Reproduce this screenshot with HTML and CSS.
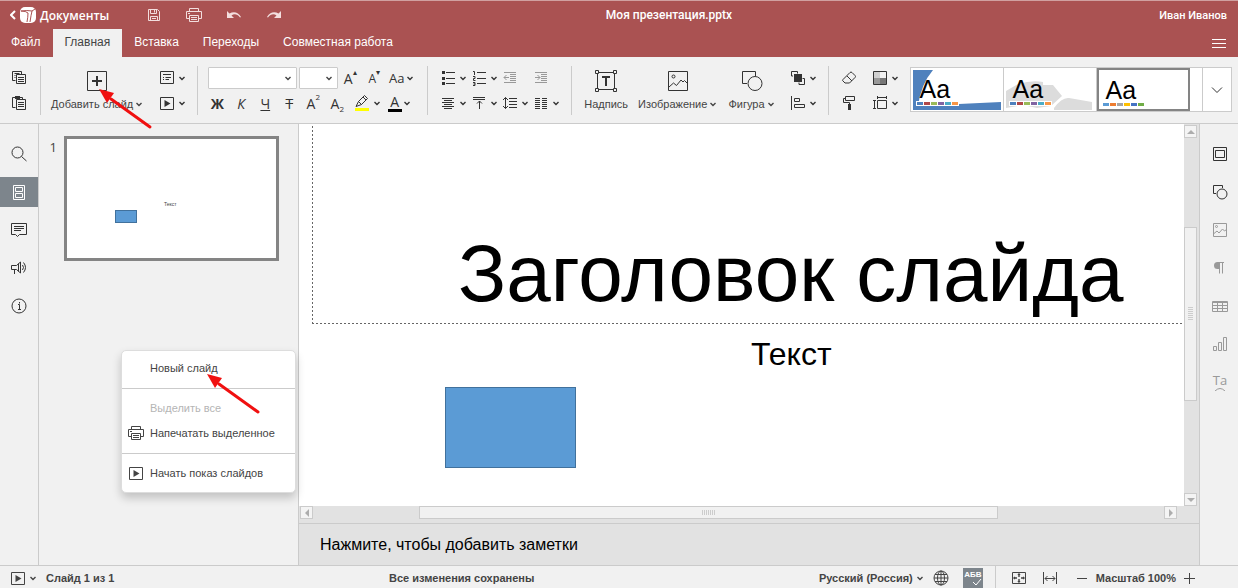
FILE: index.html
```html
<!DOCTYPE html>
<html lang="ru">
<head>
    <meta charset="UTF-8">
    <meta name="viewport" content="width=device-width, initial-scale=1.0">
    <title>Моя презентация.pptx</title>
    <link rel="stylesheet" href="styles.css">
</head>
<body>
    <!-- Icon set -->
    <svg class="sprite" aria-hidden="true">
        <symbol id="i-chev" viewBox="0 0 10 10"><path class="mid" d="M2.500 4L5 6.500 7.500 4"/></symbol>
        <symbol id="i-save" viewBox="0 0 20 20"><path d="M4.500 4.500h9l2 2v9h-11zM6.500 4.500v4h6v-4M10.500 5v2.500M6.500 15.500v-4h7v4M8 13.500h4"/></symbol>
        <symbol id="i-print" viewBox="0 0 20 20"><path d="M5.500 6.500v-3h9v3M5.500 13.500h-3v-7h15v7h-3M5.500 10.500h9v6h-9zM7 12.500h6M7 14.500h6M4 8.500h2"/></symbol>
        <symbol id="i-undo" viewBox="0 0 20 20"><path class="fill" d="M3 6v7h7L7.500 10.500C10 8.500 13.500 9 16 12.500L17 12C14.500 7 9.500 6 5.500 8.500z"/></symbol>
        <symbol id="i-redo" viewBox="0 0 20 20"><path class="fill" d="M17 6v7h-7l2.500-2.500C10 8.500 6.500 9 4 12.500L3 12C5.500 7 10.500 6 14.500 8.500z"/></symbol>
        <symbol id="i-copy" viewBox="0 0 20 20"><path d="M6.500 12.500h-3v-9h9v3M5.500 5.500h5M5.500 7.500h1M5.500 9.500h1M7.500 6.500h9v9h-9zM9 9.500h6M9 11.500h6M9 13.500h6"/></symbol>
        <symbol id="i-paste" viewBox="0 0 20 20"><path d="M6.500 14.500h-3v-10h10v2M7.500 6.500h9v10h-9zM9 9.500h6M9 11.500h6M9 13.500h6"/><path class="fill" d="M6 3h5v3H6z"/></symbol>
        <symbol id="i-add" viewBox="0 0 24 24"><path d="M1.500 2.500h19v19h-19z"/><path class="thick" d="M11 7v10M6 12h10"/></symbol>
        <symbol id="i-layout" viewBox="0 0 20 20"><path d="M3.500 3.500h13v12h-13zM6 6.500h8M6 9.500h1M8.500 9.500h5.500M6 11.500h1M8.500 11.500h3.500"/></symbol>
        <symbol id="i-play" viewBox="0 0 20 20"><path d="M3.500 4.500h13v12h-13z"/><path class="fill" d="M7.500 7v7l6-3.500z"/></symbol>
        <symbol id="i-marker" viewBox="0 0 20 20"><path d="M4 13.500l2.500-5L12.500 2.500l3 3-6 6zM6.500 8.500l3 3M11 4l3 3"/><path class="yellow" d="M3 15h14v3H3z"/></symbol>
        <symbol id="i-bullets" viewBox="0 0 20 20"><path d="M8 4.500h9M8 10.500h9M8 15.500h9"/><path class="fill" d="M4 3h3v3H4zM4 9h3v3H4zM4 14h3v3H4z"/></symbol>
        <symbol id="i-numbers" viewBox="0 0 20 20"><path d="M8 4.500h9M8 10.500h9M8 15.500h9M4 3.500h1.500v3.500M4 8.500h2v2H4.500v2H6.500M4 14.500h2v3H4M4.500 16h1.500"/></symbol>
        <symbol id="i-outdent" viewBox="0 0 20 20"><path d="M4 4.500h12M10 6.500h6M10 8.500h6M10 10.500h6M10 12.500h6M4 14.500h12M9 9.500H4M6.500 7L4 9.500 6.500 12"/></symbol>
        <symbol id="i-indent" viewBox="0 0 20 20"><path d="M4 4.500h12M10 6.500h6M10 8.500h6M10 10.500h6M10 12.500h6M4 14.500h12M4 9.500h5M6.500 7L9 9.500 6.500 12"/></symbol>
        <symbol id="i-center" viewBox="0 0 20 20"><path d="M4 5.500h12M6 7.500h8M4 9.500h12M6 11.500h8M4 13.500h12M6 15.500h8"/></symbol>
        <symbol id="i-valign" viewBox="0 0 20 20"><path d="M4 4.500h12M4 6.500h12M10.500 16V8M8 10.500L10.500 8 13 10.500"/></symbol>
        <symbol id="i-spacing" viewBox="0 0 20 20"><path d="M9 5.500h8M9 8.500h8M9 11.500h8M9 14.500h8M5.500 4.500v11M3 7l2.500-2.500L8 7M3 13l2.500 2.500L8 13"/></symbol>
        <symbol id="i-columns" viewBox="0 0 20 20"><path d="M4 5.500h5M4 7.500h5M4 9.500h5M4 11.500h5M4 13.500h5M4 15.500h5M11 5.500h5M11 7.500h5M11 9.500h5M11 11.500h5M11 13.500h5M11 15.500h5"/></symbol>
        <symbol id="i-text" viewBox="0 0 24 24"><path d="M3.500 3.500h17v17h-17z"/><path class="box" d="M1.500 1.500h3v3h-3zM19.500 1.500h3v3h-3zM1.500 19.500h3v3h-3zM19.500 19.500h3v3h-3z"/><path class="thick" d="M8 8h8M12 8v9"/></symbol>
        <symbol id="i-image" viewBox="0 0 24 24"><path d="M2.500 2.500h19v19h-19zM3 18l4.500-4 3 2.500L15 11l2 2 1.500-1.500 3 3"/><circle cx="7.500" cy="7.500" r="1.500"/></symbol>
        <symbol id="i-shape" viewBox="0 0 24 24"><path d="M7 14.500H2.500v-12h13v4.500"/><circle cx="15" cy="14.500" r="7"/></symbol>
        <symbol id="i-arrange" viewBox="0 0 20 20"><path d="M3.500 8V3.500h6v2M3.500 8H5M11 16.500h5.500v-6h-2M11 16.500v-2"/><path class="fill" d="M6 6h8v8H6z"/></symbol>
        <symbol id="i-align" viewBox="0 0 20 20"><path d="M3.500 3v14M6.500 5.500h5v3h-5zM6.500 11.500h10v3h-10z"/></symbol>
        <symbol id="i-eraser" viewBox="0 0 20 20"><path d="M4 11.500L11 4.500q1-1 2 0l3 3q1 1 0 2L10.500 15H6L4 13q-1-.5 0-1.500zM8 8l5 5"/></symbol>
        <symbol id="i-brush" viewBox="0 0 20 20"><path d="M6.500 3.500h9v4h-9zM6.500 5.500h-2v4h6v2"/><path class="fill" d="M9 11h3v6H9z"/></symbol>
        <symbol id="i-colors" viewBox="0 0 20 20"><path class="c1" d="M4 4h6v6H4z"/><path class="c2" d="M10 4h6v6h-6z"/><path class="c3" d="M4 10h6v6H4z"/><path class="c4" d="M10 10h6v6h-6z"/><path d="M3.500 3.500h13v13h-13z"/></symbol>
        <symbol id="i-size" viewBox="0 0 20 20"><path d="M7.500 7.500h9v8h-9zM7.500 4.500h9M7.500 3v3M16.500 3v3M4.500 7.500v8M3 7.500h3M3 15.500h3"/></symbol>
        <symbol id="i-more" viewBox="0 0 12 12"><path d="M1 3.500l5 5 5-5"/></symbol>
        <symbol id="i-menu" viewBox="0 0 16 16"><path d="M1 4.500h14M1 8.500h14M1 12.500h14"/></symbol>
        <symbol id="i-search" viewBox="0 0 20 20"><circle cx="8.500" cy="8.500" r="5.500"/><path d="M12.500 12.500l5 4.500"/></symbol>
        <symbol id="i-slides" viewBox="0 0 20 20"><path d="M4.500 3.500h11v14h-11zM6.500 5.500h7v4h-7zM6.500 11.500h7v4h-7z"/></symbol>
        <symbol id="i-comment" viewBox="0 0 20 20"><path d="M2.500 3.500h15v11h-7l-2 2-2-2h-4zM5 6.500h10M5 8.500h10M5 10.500h7"/></symbol>
        <symbol id="i-horn" viewBox="0 0 20 20"><path d="M2.500 7.500h5l4-3.500v11l-4-3.500h-5zM5.500 12v4M9.500 5.500v8M13.500 7q2 2.500 0 5M14.500 4.500q4 5 0 10"/></symbol>
        <symbol id="i-info" viewBox="0 0 20 20"><circle cx="10" cy="10" r="7"/><path d="M10.500 6v1.500M9 8.500h1.500v5M9 13.500h3"/></symbol>
        <symbol id="i-frame" viewBox="0 0 20 20"><path d="M3.500 3.500h13v13h-13zM5.500 6.500h9v7h-9z"/></symbol>
        <symbol id="i-shape-s" viewBox="0 0 20 20"><path d="M6 11.500H3.500v-8h9V6"/><circle cx="12" cy="12" r="5"/></symbol>
        <symbol id="i-image-s" viewBox="0 0 20 20"><path d="M3.500 3.500h13v13h-13zM4 13.500l3-2.500 2 2 3.500-4 2 2 2-1.500"/><circle cx="6.500" cy="6.500" r="1"/></symbol>
        <symbol id="i-para" viewBox="0 0 20 20"><path d="M9.500 4.500v11M12.500 4.500v11M8 4.500h6"/><path class="fill" d="M9.500 4h-2a3 3 0 000 7h2z"/></symbol>
        <symbol id="i-table" viewBox="0 0 20 20"><path d="M2.500 5.500h15v10h-15zM2.500 6.500h15M2.500 9.500h15M2.500 12.500h15M7.500 6v9.500M12.500 6v9.500"/></symbol>
        <symbol id="i-chart" viewBox="0 0 20 20"><path d="M3.500 12.500h3v4h-3zM8.500 8.500h3v8h-3zM13.500 3.500h3v13h-3z"/></symbol>
        <symbol id="i-globe" viewBox="0 0 20 20"><circle cx="10" cy="10" r="7"/><ellipse cx="10" cy="10" rx="3.500" ry="7"/><path d="M10 3v14M3 10h14M4 6.500h12M4 13.500h12"/></symbol>
        <symbol id="i-fit" viewBox="0 0 20 20"><path d="M3.500 4.500h13v11h-13z"/><path class="mid" d="M10 6v3M10 11v3M5 10h3M12 10h3M9 7l1-1 1 1M9 13l1 1 1-1M6 9l-1 1 1 1M14 9l1 1-1 1"/></symbol>
        <symbol id="i-width" viewBox="0 0 20 20"><path d="M3.500 4v12M16.500 4v12M5 10.500h10M7.500 8L5 10.500 7.500 13M12.500 8l2.500 2.500-2.500 2.500"/></symbol>
        <symbol id="i-minus" viewBox="0 0 12 12"><path d="M1 6.500h10"/></symbol>
        <symbol id="i-plus" viewBox="0 0 12 12"><path d="M0 6.500h11M5.500 1v11"/></symbol>
        <symbol id="i-arrow" viewBox="0 0 54 42"><path class="shaft" d="M12 10l39 28"/><path class="fill" d="M0 0l15 4-7 10z"/></symbol>
    </svg>

    <header class="header">
        <div class="title-row">
            <a class="brand" href="#">
                <svg class="back" viewBox="0 0 6 10"><path d="M5 1L1 5l4 4"/></svg>
                <svg class="logo" viewBox="0 0 16 16"><rect width="16" height="16" rx="5"/><path d="M1 4q6-1 11 0-1 4-2 11M12 4l3-2M1 4q5 0 7 2 0 4-1 9"/></svg>
                <span>Документы</span>
            </a>
            <div class="quick">
                <button aria-label="Сохранить"><svg class="icon"><use href="#i-save"/></svg></button>
                <button aria-label="Печать"><svg class="icon"><use href="#i-print"/></svg></button>
                <button aria-label="Отменить"><svg class="icon"><use href="#i-undo"/></svg></button>
                <button aria-label="Повторить"><svg class="icon"><use href="#i-redo"/></svg></button>
            </div>
            <div class="doc-name">Моя презентация.pptx</div>
            <div class="user">Иван Иванов</div>
        </div>
        <nav class="tabs">
            <button class="tab">Файл</button>
            <button class="tab active">Главная</button>
            <button class="tab">Вставка</button>
            <button class="tab">Переходы</button>
            <button class="tab">Совместная работа</button>
            <button class="burger" aria-label="Меню"><svg class="icon-menu"><use href="#i-menu"/></svg></button>
        </nav>
    </header>

    <div class="toolbar">
        <div class="group clip">
            <div class="row"><button class="btn" aria-label="Копировать"><svg class="icon"><use href="#i-copy"/></svg></button></div>
            <div class="row"><button class="btn" aria-label="Вставить"><svg class="icon"><use href="#i-paste"/></svg></button></div>
        </div>
        <button class="big add">
            <svg class="icon-big"><use href="#i-add"/></svg>
            <span class="caption">Добавить слайд<svg class="chev"><use href="#i-chev"/></svg></span>
        </button>
        <div class="group">
            <div class="row"><button class="btn" aria-label="Макет"><svg class="icon"><use href="#i-layout"/></svg><svg class="chev"><use href="#i-chev"/></svg></button></div>
            <div class="row"><button class="btn" aria-label="Показ"><svg class="icon"><use href="#i-play"/></svg><svg class="chev"><use href="#i-chev"/></svg></button></div>
        </div>
        <div class="group font">
            <div class="row">
                <select class="combo name" aria-label="Шрифт"><option></option></select>
                <select class="combo size" aria-label="Размер шрифта"><option></option></select>
                <button class="btn letter">A<small>▴</small></button>
                <button class="btn letter less">A<small>▾</small></button>
                <button class="btn letter case">Aa<svg class="chev"><use href="#i-chev"/></svg></button>
            </div>
            <div class="row">
                <button class="btn letter"><b>Ж</b></button>
                <button class="btn letter"><i>К</i></button>
                <button class="btn letter"><u>Ч</u></button>
                <button class="btn letter"><s>Т</s></button>
                <button class="btn letter">A<sup>2</sup></button>
                <button class="btn letter">A<sub>2</sub></button>
                <button class="btn marker" aria-label="Цвет выделения"><svg class="icon"><use href="#i-marker"/></svg><svg class="chev"><use href="#i-chev"/></svg></button>
                <button class="btn letter color"><span class="bar">A</span><svg class="chev"><use href="#i-chev"/></svg></button>
            </div>
        </div>
        <div class="group para">
            <div class="row">
                <button class="btn" aria-label="Маркеры"><svg class="icon"><use href="#i-bullets"/></svg><svg class="chev"><use href="#i-chev"/></svg></button>
                <button class="btn" aria-label="Нумерация"><svg class="icon"><use href="#i-numbers"/></svg><svg class="chev"><use href="#i-chev"/></svg></button>
                <button class="btn wide" disabled aria-label="Уменьшить отступ"><svg class="icon"><use href="#i-outdent"/></svg></button>
                <button class="btn wide" disabled aria-label="Увеличить отступ"><svg class="icon"><use href="#i-indent"/></svg></button>
            </div>
            <div class="row">
                <button class="btn" aria-label="Выравнивание"><svg class="icon"><use href="#i-center"/></svg><svg class="chev"><use href="#i-chev"/></svg></button>
                <button class="btn" aria-label="По вертикали"><svg class="icon"><use href="#i-valign"/></svg><svg class="chev"><use href="#i-chev"/></svg></button>
                <button class="btn" aria-label="Интервал"><svg class="icon"><use href="#i-spacing"/></svg><svg class="chev"><use href="#i-chev"/></svg></button>
                <button class="btn" aria-label="Колонки"><svg class="icon"><use href="#i-columns"/></svg><svg class="chev"><use href="#i-chev"/></svg></button>
            </div>
        </div>
        <div class="inserts">
            <button class="big">
                <svg class="icon-big"><use href="#i-text"/></svg>
                <span class="caption">Надпись</span>
            </button>
            <button class="big">
                <svg class="icon-big"><use href="#i-image"/></svg>
                <span class="caption">Изображение<svg class="chev"><use href="#i-chev"/></svg></span>
            </button>
            <button class="big">
                <svg class="icon-big"><use href="#i-shape"/></svg>
                <span class="caption">Фигура<svg class="chev"><use href="#i-chev"/></svg></span>
            </button>
        </div>
        <div class="group">
            <div class="row"><button class="btn" aria-label="Порядок"><svg class="icon"><use href="#i-arrange"/></svg><svg class="chev"><use href="#i-chev"/></svg></button></div>
            <div class="row"><button class="btn" aria-label="Выровнять"><svg class="icon"><use href="#i-align"/></svg><svg class="chev"><use href="#i-chev"/></svg></button></div>
        </div>
        <div class="group design">
            <div class="row">
                <button class="btn wide" aria-label="Очистить стиль"><svg class="icon"><use href="#i-eraser"/></svg></button>
                <button class="btn" aria-label="Цветовая схема"><svg class="icon"><use href="#i-colors"/></svg><svg class="chev"><use href="#i-chev"/></svg></button>
            </div>
            <div class="row">
                <button class="btn wide" aria-label="Копировать стиль"><svg class="icon"><use href="#i-brush"/></svg></button>
                <button class="btn" aria-label="Размер слайда"><svg class="icon"><use href="#i-size"/></svg><svg class="chev"><use href="#i-chev"/></svg></button>
            </div>
        </div>
        <div class="themes">
            <button class="theme">
                <svg class="art" viewBox="0 0 88 40"><path class="blue" d="M0 0h20Q8 14 5 36q40-2 83-4v8H0z"/></svg>
                <span>Aa</span>
                <svg class="swatches" viewBox="0 0 43 5"><path class="s1" d="M1 1h6v3H1z"/><path class="s2" d="M8 1h6v3H8z"/><path class="s3" d="M15 1h6v3h-6z"/><path class="s4" d="M22 1h6v3h-6z"/><path class="s5" d="M29 1h6v3h-6z"/><path class="s6" d="M36 1h6v3h-6z"/></svg>
            </button>
            <button class="theme">
                <svg class="art" viewBox="0 0 88 40"><path class="gray" d="M0 21l12-7q14-4 25-2v3h10l9 11-11 10-14 2-14-3-17 3zM48 38q8-11 15-10l23 4v8H48z"/></svg>
                <span>Aa</span>
                <svg class="swatches" viewBox="0 0 43 5"><path class="s1" d="M1 1h6v3H1z"/><path class="s2" d="M8 1h6v3H8z"/><path class="s3" d="M15 1h6v3h-6z"/><path class="s4" d="M22 1h6v3h-6z"/><path class="s5" d="M29 1h6v3h-6z"/><path class="s6" d="M36 1h6v3h-6z"/></svg>
            </button>
            <button class="theme selected">
                <span>Aa</span>
                <svg class="swatches" viewBox="0 0 43 5"><path class="s7" d="M1 1h6v3H1z"/><path class="s8" d="M8 1h6v3H8z"/><path class="s9" d="M15 1h6v3h-6z"/><path class="s10" d="M22 1h6v3h-6z"/><path class="s11" d="M29 1h6v3h-6z"/><path class="s12" d="M36 1h6v3h-6z"/></svg>
            </button>
            <button class="more" aria-label="Все темы"><svg class="icon-more"><use href="#i-more"/></svg></button>
        </div>
    </div>

    <main class="work">
        <nav class="rail">
            <button aria-label="Поиск"><svg class="icon"><use href="#i-search"/></svg></button>
            <button class="on" aria-label="Слайды"><svg class="icon"><use href="#i-slides"/></svg></button>
            <button aria-label="Комментарии"><svg class="icon"><use href="#i-comment"/></svg></button>
            <button aria-label="Поддержка"><svg class="icon"><use href="#i-horn"/></svg></button>
            <button aria-label="О программе"><svg class="icon"><use href="#i-info"/></svg></button>
        </nav>

        <aside class="slides">
            <span class="num">1</span>
            <div class="thumb">
                <span class="thumb-text">Текст</span>
                <div class="thumb-rect"></div>
            </div>
        </aside>

        <section class="editor">
            <div class="view">
                <div class="canvas">
                    <div class="placeholder"></div>
                    <h1 class="slide-title">Заголовок слайда</h1>
                    <p class="slide-text">Текст</p>
                    <div class="rect"></div>
                </div>
                <div class="vscroll">
                    <button aria-label="Вверх"><svg viewBox="0 0 8 8"><path d="M0 6h8L4 2z"/></svg></button>
                    <div class="track"><div class="knob"></div></div>
                    <button aria-label="Вниз"><svg viewBox="0 0 8 8"><path d="M0 2h8L4 6z"/></svg></button>
                </div>
            </div>
            <div class="hscroll">
                <button aria-label="Влево"><svg viewBox="0 0 8 8"><path d="M6 0v8L2 4z"/></svg></button>
                <div class="track"><div class="knob"></div></div>
                <button aria-label="Вправо"><svg viewBox="0 0 8 8"><path d="M2 0v8l4-4z"/></svg></button>
            </div>
            <div class="notes">Нажмите, чтобы добавить заметки</div>
        </section>

        <nav class="rail right">
            <button aria-label="Слайд"><svg class="icon"><use href="#i-frame"/></svg></button>
            <button aria-label="Фигура"><svg class="icon"><use href="#i-shape-s"/></svg></button>
            <button disabled aria-label="Изображение"><svg class="icon"><use href="#i-image-s"/></svg></button>
            <button disabled aria-label="Абзац"><svg class="icon"><use href="#i-para"/></svg></button>
            <button disabled aria-label="Таблица"><svg class="icon"><use href="#i-table"/></svg></button>
            <button disabled aria-label="Диаграмма"><svg class="icon"><use href="#i-chart"/></svg></button>
            <button disabled class="textart">Ta<svg viewBox="0 0 12 4"><path d="M1 4q5-5 10 0"/></svg></button>
        </nav>
    </main>

    <footer class="status">
        <button class="btn" aria-label="Начать показ"><svg class="icon"><use href="#i-play"/></svg><svg class="chev"><use href="#i-chev"/></svg></button>
        <span class="pages">Слайд 1 из 1</span>
        <span class="saved">Все изменения сохранены</span>
        <button class="lang">Русский (Россия)<svg class="chev"><use href="#i-chev"/></svg></button>
        <button class="btn globe" aria-label="Язык"><svg class="icon"><use href="#i-globe"/></svg></button>
        <button class="spell">АБВ<svg viewBox="0 0 20 8"><path d="M10 3l3 3 5-6"/></svg></button>
        <div class="zoom">
            <button class="btn" aria-label="По размеру слайда"><svg class="icon"><use href="#i-fit"/></svg></button>
            <button class="btn" aria-label="По ширине"><svg class="icon"><use href="#i-width"/></svg></button>
            <div class="scale">
                <button class="btn" aria-label="Уменьшить"><svg class="icon-more"><use href="#i-minus"/></svg></button>
                <span>Масштаб 100%</span>
                <button class="btn" aria-label="Увеличить"><svg class="icon-more"><use href="#i-plus"/></svg></button>
            </div>
        </div>
    </footer>

    <!-- Context menu of the slide list -->
    <div class="menu">
        <button>Новый слайд</button>
        <hr>
        <button disabled>Выделить все</button>
        <button><svg class="icon"><use href="#i-print"/></svg>Напечатать выделенное</button>
        <hr>
        <button><svg class="icon"><use href="#i-play"/></svg>Начать показ слайдов</button>
    </div>

    <svg class="pointer first"><use href="#i-arrow"/></svg>
    <svg class="pointer second"><use href="#i-arrow"/></svg>
</body>
</html>
```
FILE: styles.css
```css
* {
    box-sizing: border-box;
}

body {
    display: flex;
    flex-direction: column;
    height: 100vh;
    margin: 0;
    overflow: hidden;
    position: relative;
    background-color: #f1f1f1;
    font-family: "Liberation Sans", Arial, sans-serif;
    font-size: 11px;
    color: #444;
}

button {
    display: flex;
    align-items: center;
    padding: 0;
    border: 0;
    background: none;
    font: inherit;
    color: inherit;
    white-space: nowrap;
}

svg {
    display: block;
    flex: none;
    fill: none;
    stroke: currentColor;
}

.sprite {
    position: absolute;
    width: 0;
    height: 0;
}

.fill { fill: currentColor; stroke: none; }
.mid { stroke-width: 1.4; }
.thick { stroke-width: 2; }
.box { fill: #f1f1f1; }
.yellow { fill: #ff0; stroke: none; }
.c1 { fill: #d0d0d0; stroke: none; }
.c2 { fill: #f1f1f1; stroke: none; }
.c3 { fill: #999; stroke: none; }
.c4 { fill: #777; stroke: none; }

.icon {
    width: 20px;
    height: 20px;
}

.icon-big {
    width: 24px;
    height: 24px;
}

.icon-menu {
    width: 16px;
    height: 16px;
}

.icon-more {
    width: 12px;
    height: 12px;
}

.chev {
    width: 10px;
    height: 10px;
}

/* Header */
.header {
    flex: none;
    border-top: 1px solid #d0a0a0;
    background-color: #aa5252;
    color: #fff;
}

.title-row {
    display: flex;
    align-items: center;
    height: 28px;
}

.brand {
    display: flex;
    align-items: center;
    gap: 4px;
    width: 144px;
    padding-left: 10px;
    color: #fff;
    font: 600 12px "Open Sans", sans-serif;
    text-decoration: none;
}

.back {
    width: 6px;
    height: 10px;
    stroke-width: 2;
}

.logo {
    width: 16px;
    height: 16px;
    stroke: #aa5252;
}

.logo rect {
    fill: #fff;
    stroke: none;
}

.quick {
    display: flex;
    gap: 20px;
    color: #f3dede;
}

.doc-name {
    flex: 1;
    margin-left: 6px;
    text-align: center;
    font: 500 12px Roboto, sans-serif;
}

.user {
    width: 190px;
    padding-right: 11px;
    text-align: right;
    font: 500 11px Roboto, sans-serif;
}

.tabs {
    display: flex;
    height: 28px;
}

.tab {
    padding: 0 12px 2px;
    font-size: 12px;
}

.tab:first-child {
    padding-left: 11px;
}

.tab.active {
    background-color: #f1f1f1;
    color: #444;
}

.burger {
    margin: 0 11px 0 auto;
}

/* Toolbar */
.toolbar {
    display: flex;
    flex: none;
    gap: 10px;
    height: 67px;
    padding: 9px 6px 0 0;
    border-bottom: 1px solid #cbcbcb;
    color: #333;
}

.group {
    display: flex;
    flex-direction: column;
    gap: 1px;
    height: 49px;
}

.row {
    display: flex;
    align-items: center;
    gap: 1px;
    height: 24px;
}

.btn {
    height: 24px;
}

.btn:disabled {
    color: #999;
}

.wide {
    width: 30px;
}

.clip {
    padding: 0 11px 0 9px;
    border-right: 1px solid #cbcbcb;
}

.big {
    flex-direction: column;
    height: 49px;
    padding-top: 3px;
}

.add {
    margin-right: 3px;
}

.caption {
    display: flex;
    align-items: center;
    margin-top: 5px;
    color: #444;
}

.caption .chev {
    margin-left: 1px;
}

.font,
.para,
.inserts,
.design {
    border-left: 1px solid #cbcbcb;
    padding-left: 10px;
}

.group.font {
    padding-left: 7px;
}

.font .row {
    gap: 0;
}

.combo {
    appearance: none;
    height: 22px;
    margin-right: 2px;
    border: 1px solid #cbcbcb;
    border-radius: 1px;
    background: #fff url("data:image/svg+xml,%3Csvg xmlns='http://www.w3.org/2000/svg' width='10' height='10' fill='none' stroke='%23444' stroke-width='1.4'%3E%3Cpath d='M2.500 4L5 6.500 7.500 4'/%3E%3C/svg%3E") no-repeat right 3px center;
}

.combo.name {
    width: 89px;
    margin-left: 3px;
}

.combo.size {
    width: 39px;
    margin-right: 0;
}

.letter {
    justify-content: center;
    width: 24px;
    font: 14px "Open Sans", sans-serif;
}

.letter small,
.letter sup,
.letter sub {
    align-self: flex-start;
    font-size: 8px;
    line-height: 12px;
}

.letter sub {
    align-self: flex-end;
}

.less {
    font-size: 12px;
}

.marker {
    width: 32px;
    margin-left: 3px;
}

.color,
.case {
    width: 31px;
}

.case {
    font-size: 13px;
}

.bar {
    width: 14px;
    border-bottom: 3px solid #000;
    line-height: 15px;
    text-align: center;
}

.inserts {
    display: flex;
    gap: 10px;
    height: 49px;
    margin-right: 2px;
    padding-left: 12px;
}

/* Theme gallery */
.themes {
    display: flex;
    flex: 1;
    margin-top: 1px;
    height: 45px;
    border: 1px solid #cbcbcb;
    background-color: #fff;
}

.theme {
    position: relative;
    flex-direction: column;
    align-items: flex-start;
    justify-content: flex-start;
    width: 93px;
    padding: 9px 6px 0 5px;
    border-right: 1px solid #cbcbcb;
    color: #000;
}

.theme span {
    position: relative;
    margin-left: 4px;
    font: 25px/24px "Liberation Sans", sans-serif;
}

.theme.selected {
    border: 2px solid #848484;
    padding: 8px 4px 0 3px;
}

.art {
    position: absolute;
    top: 2px;
    left: 2px;
    width: 88px;
    height: 40px;
}

.art path {
    stroke: none;
}

.swatches {
    position: relative;
    width: 43px;
    height: 5px;
    background-color: #fff;
}

.swatches path {
    stroke: none;
}

.blue, .s1 { fill: #4f81bd; }
.gray { fill: #dcdcdc; }
.s2 { fill: #b04848; }
.s3 { fill: #9bbb59; }
.s4 { fill: #8064a2; }
.s5 { fill: #4bacc6; }
.s6 { fill: #f79646; }
.s7 { fill: #5b9bd5; }
.s8 { fill: #ed7d31; }
.s9 { fill: #a5a5a5; }
.s10 { fill: #ffc000; }
.s11 { fill: #4472c4; }
.s12 { fill: #70ad47; }

.more {
    justify-content: center;
    width: 29px;
    margin-left: auto;
    border-left: 1px solid #cbcbcb;
}

/* Work area */
.work {
    display: flex;
    flex: 1;
    min-height: 0;
}

.rail {
    display: flex;
    flex: none;
    flex-direction: column;
    gap: 8px;
    width: 39px;
    padding-top: 15px;
    border-right: 1px solid #cbcbcb;
    color: #333;
}

.rail button {
    justify-content: center;
    height: 30px;
}

.rail .on {
    background-color: #7d858c;
    color: #fff;
}

.rail button:disabled {
    color: #999;
}

.rail.right {
    padding-left: 2px;
    border-right: 0;
    border-left: 1px solid #cbcbcb;
}

.rail .textart {
    flex-direction: column;
    font: 13px/13px "Open Sans", sans-serif;
}

.textart svg {
    width: 12px;
    height: 4px;
}

.slides {
    display: flex;
    flex: none;
    align-items: flex-start;
    justify-content: flex-end;
    gap: 7px;
    width: 260px;
    padding: 12px 19px 0 0;
    border-right: 1px solid #cbcbcb;
}

.num {
    padding-top: 3px;
    font: 13px/16px "Open Sans", sans-serif;
}

.thumb {
    position: relative;
    width: 215px;
    height: 125px;
    border: 3px solid #848484;
    background-color: #fff;
}

.thumb-text {
    position: absolute;
    top: 62px;
    left: 97px;
    font-size: 5px;
}

.thumb-rect {
    position: absolute;
    top: 71px;
    left: 48px;
    width: 22px;
    height: 13px;
    border: 1px solid #41719c;
    background-color: #5b9bd5;
}

.editor {
    display: flex;
    flex: 1;
    flex-direction: column;
    min-width: 0;
    background-color: #e2e2e2;
}

.view {
    display: flex;
    flex: 1;
    min-height: 0;
}

.canvas {
    position: relative;
    flex: 1;
    overflow: hidden;
    background-color: #fff;
    color: #000;
}

.placeholder {
    position: absolute;
    top: 2px;
    left: 13px;
    right: 0;
    height: 198px;
    background:
        repeating-linear-gradient(90deg, #666 0 2px, #fff 2px 4px) bottom / 100% 1px no-repeat,
        repeating-linear-gradient(#666 0 2px, #fff 2px 4px) left / 1px 100% no-repeat;
}

.slide-title {
    position: absolute;
    top: 104px;
    left: 159px;
    margin: 0;
    font-size: 80px;
    font-weight: normal;
    line-height: 92px;
    white-space: nowrap;
}

.slide-text {
    position: absolute;
    top: 212px;
    left: 452px;
    margin: 0;
    font-size: 32px;
    line-height: 36px;
}

.rect {
    position: absolute;
    top: 263px;
    left: 146px;
    width: 131px;
    height: 81px;
    border: 1px solid #41719c;
    background-color: #5b9bd5;
}

/* Scrollbars */
.vscroll {
    display: flex;
    flex: none;
    flex-direction: column;
    width: 15px;
    padding: 1px 2px 0 0;
}

.hscroll {
    display: flex;
    flex: none;
    height: 18px;
    padding: 0 22px 4px 1px;
    border-bottom: 1px solid #cbcbcb;
}

.vscroll button,
.hscroll button {
    flex: none;
    justify-content: center;
    width: 13px;
    height: 13px;
    border: 1px solid #cbcbcb;
    background-color: #f4f4f4;
}

.vscroll button svg,
.hscroll button svg {
    width: 8px;
    height: 8px;
    fill: #adadad;
    stroke: none;
}

.track {
    flex: 1;
}

.knob {
    border: 1px solid #cbcbcb;
    background-color: #f1f1f1;
}

.vscroll .knob {
    height: 49%;
    margin-top: 89px;
    background: repeating-linear-gradient(#ccc 0 1px, #f1f1f1 1px 2px) center / 5px 13px no-repeat #f1f1f1;
}

.hscroll .knob {
    width: 68%;
    height: 13px;
    margin-left: 106px;
    background: repeating-linear-gradient(90deg, #ccc 0 1px, #f1f1f1 1px 2px) center / 13px 5px no-repeat #f1f1f1;
}

.notes {
    height: 41px;
    padding-left: 21px;
    color: #000;
    font-size: 16px;
    line-height: 42px;
}

/* Status bar */
.status {
    display: flex;
    flex: none;
    align-items: center;
    height: 23px;
    padding: 2px 42px 0 8px;
    border-top: 1px solid #cbcbcb;
    font-weight: bold;
}

.pages {
    margin-left: 8px;
}

.saved {
    flex: 1;
    padding-right: 10px;
    text-align: center;
}

.globe {
    margin: 0 12px 0 6px;
}

.lang .chev {
    margin-left: 2px;
}

.spell {
    flex-direction: column;
    width: 20px;
    height: 20px;
    padding-top: 3px;
    background-color: #7d858c;
    color: #fff;
    font-size: 8px;
    line-height: 8px;
}

.spell svg {
    width: 20px;
    height: 8px;
}

.zoom {
    display: flex;
    align-items: center;
    gap: 11px;
    margin-left: 12px;
    padding-left: 13px;
    border-left: 1px solid #cbcbcb;
}

.scale {
    display: flex;
    align-items: center;
    gap: 8px;
    margin-left: 5px;
}

/* Context menu */
.menu {
    position: absolute;
    top: 350px;
    left: 121px;
    width: 175px;
    padding: 4px 0 7px;
    border: 1px solid #ddd;
    border-radius: 5px;
    background-color: #fff;
    box-shadow: 0 5px 10px rgba(0, 0, 0, 0.2);
}

.menu button {
    gap: 4px;
    width: 100%;
    height: 25px;
    padding-left: 28px;
}

.menu button:disabled {
    color: #b5b5b5;
}

.menu button:has(svg) {
    padding-left: 4px;
}

.menu hr {
    height: 1px;
    margin: 8px 0 6px;
    border: 0;
    background-color: #cbcbcb;
}

/* Hint arrows */
.pointer {
    position: absolute;
    width: 54px;
    height: 42px;
    color: #f01010;
}

.pointer.first {
    top: 89px;
    left: 99px;
}

.pointer.second {
    top: 374px;
    left: 207px;
}

.shaft {
    stroke-width: 3;
    stroke-linecap: round;
}
```
